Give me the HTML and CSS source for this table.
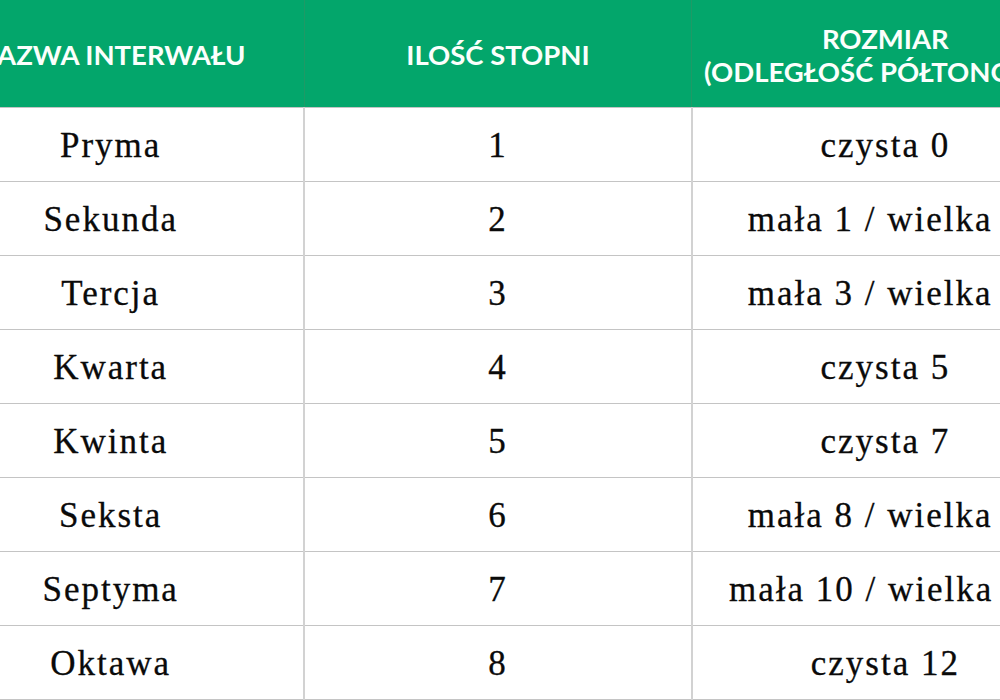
FILE: index.html
```html
<!DOCTYPE html>
<html lang="pl">
<head>
<meta charset="utf-8">
<link rel="stylesheet" href="styles.css">
</head>
<body>
<div class="frame">
<table class="intervals">
<thead>
<tr><th>NAZWA INTERWAŁU</th><th>ILOŚĆ STOPNI</th><th>ROZMIAR<br>(ODLEGŁOŚĆ PÓŁTONOWA)</th></tr>
</thead>
<tbody>
<tr><td>Pryma</td><td>1</td><td>czysta 0</td></tr>
<tr><td>Sekunda</td><td>2</td><td>mała 1 / wielka 2</td></tr>
<tr><td>Tercja</td><td>3</td><td>mała 3 / wielka 4</td></tr>
<tr><td>Kwarta</td><td>4</td><td>czysta 5</td></tr>
<tr><td>Kwinta</td><td>5</td><td>czysta 7</td></tr>
<tr><td>Seksta</td><td>6</td><td>mała 8 / wielka 9</td></tr>
<tr><td>Septyma</td><td>7</td><td>mała 10 / wielka 11</td></tr>
<tr><td>Oktawa</td><td>8</td><td>czysta 12</td></tr>
</tbody>
</table>
</div>
</body>
</html>
```
FILE: styles.css
```css
html, body {
  margin: 0;
  padding: 0;
  background: #fff;
}
.frame {
  width: 1000px;
  height: 700px;
  overflow: hidden;
}
.intervals {
  margin-left: -84px;
  width: 1164px;
  border-collapse: collapse;
  table-layout: fixed;
}
.intervals th {
  height: 107px;
  padding: 3px 0 0;
  box-sizing: border-box;
  background: #03a66b;
  color: #fbfffc;
  font-family: Lato, "Open Sans", sans-serif;
  font-weight: 700;
  font-size: 27.5px;
  line-height: 33px;
  text-align: center;
  vertical-align: middle;
  white-space: nowrap;
  border-left: 1px solid #1e9a66;
  border-right: 1px solid #1e9a66;
}
.intervals td {
  height: 70px;
  padding: 3px 0 0;
  font-family: "Liberation Serif", "Times New Roman", serif;
  font-size: 35px;
  letter-spacing: 2px;
  color: #0a0a0a;
  -webkit-text-stroke: 0.3px #0a0a0a;
  text-align: center;
  vertical-align: middle;
  white-space: nowrap;
  border: 2px solid #d2d2d2;
  border-top: 1px solid #c4c4c4;
  border-bottom: 1px solid #c4c4c4;
}
```
